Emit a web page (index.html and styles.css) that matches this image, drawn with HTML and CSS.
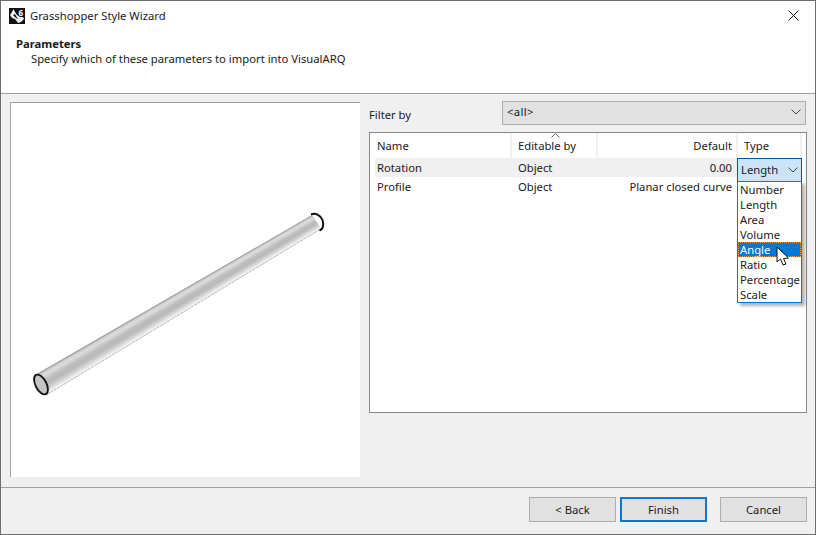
FILE: index.html
```html
<!DOCTYPE html>
<html lang="en">
<head>
<meta charset="utf-8">
<title>Grasshopper Style Wizard</title>
<link rel="stylesheet" href="styles.css">
</head>
<body>
<div class="window">
  <div class="titlebar">
    <svg class="app-icon" width="16" height="16" viewBox="0 0 16 16">
      <rect width="16" height="16" fill="#111"/>
      <path d="M1 7 L3 4 L4.5 1 L6 4 L8 7 L11 9 L14 9 L15 11 L12 14 L9 15 L6 11 L3 10 Z" fill="#f2f2f2"/>
      <path d="M4 7 L6 6 L7 8 L9 11 L7 10 Z" fill="#111"/>
      <text x="9.5" y="7.5" class="app-icon-num">6</text>
    </svg>
    <span class="title">Grasshopper Style Wizard</span>
    <svg class="close" width="11" height="11" viewBox="0 0 11 11"><path d="M0.5 0.5 L10.5 10.5 M10.5 0.5 L0.5 10.5" stroke="#1a1a1a" stroke-width="1" fill="none"/></svg>
  </div>
  <div class="header">
    <div class="header-title">Parameters</div>
    <div class="header-sub">Specify which of these parameters to import into VisualARQ</div>
  </div>
  <div class="main">
    <div class="preview">
      <svg width="349" height="374" viewBox="11 103 349 374">
        <path d="M36.5 374 L312 215 L320.5 229 L47 394.5 Z" fill="#a0a0a0"/>
        <path d="M37 375 L312.4 215.7 L320.5 229 L47 394.5 Z" fill="#bcbcbc"/>
        <path d="M37.4 375.8 L312.7 216.2 L320.5 229 L47 394.5 Z" fill="#d2d2d2"/>
        <path d="M38.2 377.3 L313.3 217.2 L320.5 229 L47 394.5 Z" fill="#dcdcdc"/>
        <path d="M39.1 379.1 L314.1 218.5 L320.5 229 L47 394.5 Z" fill="#d2d2d2"/>
        <path d="M39.9 380.7 L314.8 219.6 L320.5 229 L47 394.5 Z" fill="#c6c6c6"/>
        <path d="M40.7 382.2 L315.4 220.6 L320.5 229 L47 394.5 Z" fill="#bcbcbc"/>
        <path d="M42.3 385.3 L316.7 222.7 L320.5 229 L47 394.5 Z" fill="#b8b8b8"/>
        <path d="M43.1 386.8 L317.3 223.7 L320.5 229 L47 394.5 Z" fill="#c2c2c2"/>
        <path d="M43.9 388.4 L318 224.8 L320.5 229 L47 394.5 Z" fill="#cecece"/>
        <path d="M44.7 389.9 L318.6 225.8 L320.5 229 L47 394.5 Z" fill="#dadada"/>
        <path d="M45.4 391.4 L319.2 226.9 L320.5 229 L47 394.5 Z" fill="#e8e8e8"/>
        <path d="M46.2 392.9 L319.8 227.9 L320.5 229 L47 394.5 Z" fill="#f4f4f4"/>
        <path class="edge" d="M47 394.5 L320.5 229"/>
        <path class="rim" d="M311 214.5 C315 212.5 320.5 215 322.5 220 C324 225 323 229.5 319.5 230.5"/>
        <ellipse class="rim-front" cx="41" cy="384.5" rx="5.5" ry="10.8" transform="rotate(-27 41 384.5)"/>
      </svg>
    </div>
    <div class="side">
      <div class="filter">
        <label class="filter-label">Filter by</label>
        <div class="filter-select">
          <span class="all">&lt;all&gt;</span>
          <svg class="chev" width="10" height="6" viewBox="0 0 10 6"><path d="M0.5 0.5 L5 5 L9.5 0.5" stroke="#444" fill="none"/></svg>
        </div>
      </div>
      <div class="table">
        <div class="thead">
          <div class="th th-name">Name</div>
          <div class="th th-edit">Editable by
            <svg class="sort" width="9" height="5" viewBox="0 0 9 5"><path d="M0.5 4.5 L4.5 0.5 L8.5 4.5" stroke="#666" fill="none"/></svg>
          </div>
          <div class="th th-def">Default</div>
          <div class="th th-type">Type</div>
        </div>
        <div class="row row-sel">
          <div class="td td-name">Rotation</div>
          <div class="td td-edit">Object</div>
          <div class="td td-def">0.00</div>
        </div>
        <div class="row">
          <div class="td td-name">Profile</div>
          <div class="td td-edit">Object</div>
          <div class="td td-def">Planar closed curve</div>
        </div>
        <div class="combo">
          <span>Length</span>
          <svg class="chev" width="10" height="6" viewBox="0 0 10 6"><path d="M0.5 0.5 L5 5 L9.5 0.5" stroke="#444" fill="none"/></svg>
        </div>
        <ul class="menu">
          <li>Number</li>
          <li>Length</li>
          <li>Area</li>
          <li>Volume</li>
          <li class="active">Angle</li>
          <li>Ratio</li>
          <li>Percentage</li>
          <li>Scale</li>
        </ul>
        <svg class="cursor" width="15" height="21" viewBox="0 0 15 21"><path d="M1 1 L1 16 L4.5 13 L7 19 L10 18 L7.5 12.5 L12.5 12 Z" fill="#fff" stroke="#111" stroke-width="1" stroke-linejoin="round"/></svg>
      </div>
    </div>
  </div>
  <div class="footer">
    <button class="btn">&lt; Back</button>
    <button class="btn btn-primary">Finish</button>
    <button class="btn btn-cancel">Cancel</button>
  </div>
</div>
</body>
</html>
```

FILE: styles.css
```css
* { box-sizing: border-box; }
html, body { margin: 0; padding: 0; }
body {
  width: 816px;
  height: 535px;
  overflow: hidden;
  font-family: "Noto Sans", "Open Sans", sans-serif;
  font-size: 11.25px;
  color: #1a1a1a;
}
.window {
  width: 816px;
  height: 535px;
  border: 1px solid #6e6e6e;
  background: #f0f0f0;
  display: flex;
  flex-direction: column;
}
.titlebar {
  height: 29px;
  background: #fff;
  display: flex;
  align-items: center;
  padding: 0 16px 0 8px;
  flex: none;
}
.app-icon { flex: none; margin-right: 5px; }
.app-icon-num { font-size: 8px; font-weight: 700; fill: #fff; }
.title { flex: 1; }
.close { flex: none; }
.header {
  height: 64px;
  background: #fff;
  border-bottom: 1px solid #a0a0a0;
  padding: 6px 0 0 15px;
  flex: none;
  line-height: 15px;
}
.header-title { font-weight: 700; }
.header-sub { padding-left: 15px; }
.main {
  flex: 1;
  display: flex;
  padding: 8px 8px 10px 9px;
  gap: 9px;
  border-bottom: 1px solid #a0a0a0;
  min-height: 0;
}
.preview {
  width: 350px;
  height: 375px;
  background: #fff;
  border: 1px solid #a0a0a0;
  border-right: 0;
  border-bottom: 0;
  flex: none;
}
.preview svg { display: block; }
.edge { fill: none; stroke: #a8a8a8; stroke-width: 0.7; stroke-dasharray: 3 1; }
.rim { fill: none; stroke: #111; stroke-width: 2; }
.rim-front { fill: #c4c4c4; stroke: #111; stroke-width: 1.8; }
.side { flex: 1; display: flex; flex-direction: column; min-width: 0; }
.filter {
  display: flex;
  align-items: center;
  height: 24px;
  margin-top: -1px;
  margin-bottom: 7px;
}
.filter-label { width: 133px; flex: none; padding-top: 3px; }
.filter-select {
  width: 304px;
  height: 24px;
  background: #e1e1e1;
  border: 1px solid #adadad;
  display: flex;
  align-items: center;
  justify-content: space-between;
  padding: 0 4px 3px 4px;
}
.all { letter-spacing: 0.35px; }
.chev { flex: none; }
.table {
  position: relative;
  width: 438px;
  height: 281px;
  background: #fff;
  border: 1px solid #828790;
}
.thead { display: flex; height: 25px; }
.th {
  display: flex;
  align-items: center;
  padding-bottom: 1px;
  border-right: 2px solid #f0f0f0;
  position: relative;
}
.th-name { width: 142px; padding-left: 7px; }
.th-edit { width: 86px; padding-left: 6px; }
.th-def { width: 140px; justify-content: flex-end; padding-right: 4px; }
.th-type { width: 64px; padding-left: 6px; }
.sort { position: absolute; left: 39px; top: 0; }
.row { display: flex; height: 19px; align-items: center; margin-left: 5px; width: 362px; }
.row-sel { background: #f0f0f0; }
.td-name { width: 137px; padding-left: 2px; }
.td-edit { width: 86px; padding-left: 6px; }
.td-def { width: 139px; text-align: right; padding-right: 5px; white-space: nowrap; }
.combo {
  position: absolute;
  left: 367px;
  top: 25px;
  width: 65px;
  height: 24px;
  background: #cce4f7;
  border: 1px solid #005499;
  display: flex;
  align-items: center;
  justify-content: space-between;
  padding: 0 3px 1px 3px;
}
.menu {
  position: absolute;
  left: 367px;
  top: 48px;
  width: 65px;
  height: 122px;
  margin: 0;
  padding: 0;
  list-style: none;
  background: #fff;
  border: 1px solid #0078d7;
  box-shadow: 3px 3px 3px rgba(0, 0, 0, 0.3);
  line-height: 15px;
}
.menu li { height: 15px; padding-left: 2px; white-space: nowrap; }
.menu .active { background: #0078d7; color: #fff; outline: 1px dotted #e0a050; outline-offset: -1px; }
.cursor { position: absolute; left: 406px; top: 113px; }
.footer {
  height: 46px;
  flex: none;
  display: flex;
  align-items: flex-start;
  padding: 9px 8px 0 528px;
}
.btn {
  width: 87px;
  height: 25px;
  background: #e1e1e1;
  border: 1px solid #adadad;
  font: inherit;
  color: inherit;
  padding: 0;
  margin-right: 4px;
}
.btn-primary { border: 2px solid #0078d7; }
.btn-cancel { margin: 0 0 0 9px; }
```
